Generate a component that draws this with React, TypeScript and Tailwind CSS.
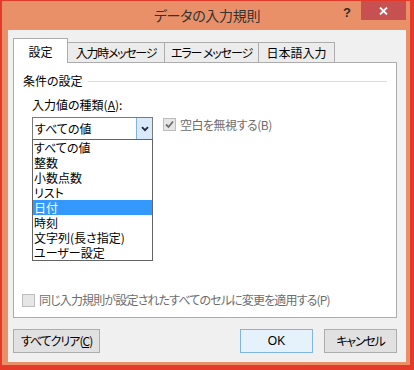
import React from 'react';

const types = ['すべての値', '整数', '小数点数', 'リスト', '日付', '時刻', '文字列(長さ指定)', 'ユーザー設定'];

const tabs = [
  { label: '入力時メッセージ', w: 'w-[97px]', t: 'tracking-[-1.3px]' },
  { label: 'エラー メッセージ', w: 'w-[94px]', t: 'tracking-[-1.1px]' },
  { label: '日本語入力', w: 'w-[76px]', t: '' },
];

const App: React.FC = () => {
  return (
    <div className="w-[414px] h-[370px] flex flex-col bg-[#ea9068] border-t border-l-2 border-r-4 border-b-[5px] border-[#e5392a] font-['Noto_Sans_CJK_JP',sans-serif] [font-feature-settings:'palt'] text-[12px] text-black leading-none">
      {/* Title bar */}
      <div className="h-[29px] flex pl-[6px] pr-[4px]">
        <div className="w-[68px]" />
        <div className="flex-1 text-center text-[14px] text-[#333] pt-[7px] tracking-[-0.3px]">データの入力規則</div>
        <div className="w-[68px] flex items-start justify-end">
          <span className="w-[18px] text-center font-bold text-[13px] text-[#2d2d2d] pt-[5px] font-['Liberation_Sans',sans-serif]">?</span>
          <div className="ml-[5px] w-[45px] h-[19px] bg-[#c75050] flex items-center justify-center">
            <svg width="9" height="8" viewBox="0 0 9 8">
              <path d="M1 0.5 L8 7.5 M8 0.5 L1 7.5" stroke="#fff" strokeWidth="1.8" />
            </svg>
          </div>
        </div>
      </div>

      {/* Client area */}
      <div className="ml-[6px] w-[398px] h-[332px] bg-[#f0f0f0] pt-[8px] pl-[5px] flex flex-col">
        {/* Tabs */}
        <div className="flex items-end h-[24px]">
          <div className="relative z-10 -mb-px h-[25px] w-[55px] bg-white border border-b-0 border-[#acacac] flex items-center justify-center pt-[1px]">
            設定
          </div>
          {tabs.map((t) => (
            <div
              key={t.label}
              className={`${t.w} ${t.t} h-[20px] bg-[#ececec] border-t border-r border-[#acacac] flex items-center justify-center whitespace-pre`}
            >
              {t.label}
            </div>
          ))}
        </div>

        {/* Panel */}
        <div className="w-[384px] h-[256px] bg-white border border-[#acacac] flex flex-col">
          <div className="mt-[10px] pl-[9px] pr-[9px] h-[16px] flex items-center gap-[5px]">
            <span>条件の設定</span>
            <div className="flex-1 h-px bg-[#dcdcdc]" />
          </div>

          <div className="mt-[8px] pl-[18px] h-[16px] flex items-center">
            入力値の種類(<span className="underline">A</span>):
          </div>

          <div className="mt-[4px] pl-[18px] flex items-start">
            <div className="relative w-[121px] h-[23px] border border-[#7a7a7a] bg-white flex">
              <div className="flex-1 flex items-center pl-[2px]">すべての値</div>
              <div className="w-[16px] h-full bg-[#d9eafb] border-l border-[#7eb4ea] flex items-center justify-center">
                <svg width="8" height="6" viewBox="0 0 8 6">
                  <path d="M1 1.2 L4 4.2 L7 1.2" stroke="#1e2b3c" strokeWidth="1.8" fill="none" />
                </svg>
              </div>

              {/* Drop-down list */}
              <div className="absolute left-[-1px] top-full z-20 w-[121px] border border-[#646464] bg-white">
                {types.map((t) => (
                  <div
                    key={t}
                    className={`h-[15px] leading-[15px] pl-[1px] overflow-hidden ${t === '日付' ? 'bg-[#3399ff] text-white' : ''}`}
                  >
                    {t}
                  </div>
                ))}
              </div>
            </div>

            <div className="ml-[10px] mt-[1px] flex items-center gap-[4px] text-[#6d6d6d]">
              <div className="w-[13px] h-[13px] bg-[#e6e6e6] border border-[#bcbcbc] flex items-center justify-center">
                <svg width="11" height="11" viewBox="0 0 11 11">
                  <path d="M2 5.5 L4.5 8 L9 2.5" stroke="#707070" strokeWidth="1.8" fill="none" />
                </svg>
              </div>
              <span className="tracking-[-0.5px]">空白を無視する(B)</span>
            </div>
          </div>

          <div className="mt-auto mb-[9px] pl-[8px] h-[16px] flex items-center gap-[4px] text-[#6d6d6d]">
            <div className="w-[13px] h-[13px] bg-[#e6e6e6] border border-[#bcbcbc]" />
            <span className="tracking-[-0.85px]">同じ入力規則が設定されたすべてのセルに変更を適用する(P)</span>
          </div>
        </div>

        {/* Buttons */}
        <div className="mt-[11px] pr-[9px] flex gap-[11px]">
          <button className="w-[87px] h-[24px] bg-[#e1e1e1] border border-[#adadad] flex items-center justify-center tracking-[-1px]">
            すべてクリア(<span className="underline">C</span>)
          </button>
          <div className="flex-1" />
          <button className="w-[73px] h-[24px] bg-[#e5f1fb] border border-[#7eb4ea] flex items-center justify-center font-['Liberation_Sans',sans-serif] text-[12px]">
            OK
          </button>
          <button className="w-[73px] h-[24px] bg-[#e1e1e1] border border-[#adadad] flex items-center justify-center tracking-[-1.2px]">
            キャンセル
          </button>
        </div>
      </div>
    </div>
  );
};

export default App;
